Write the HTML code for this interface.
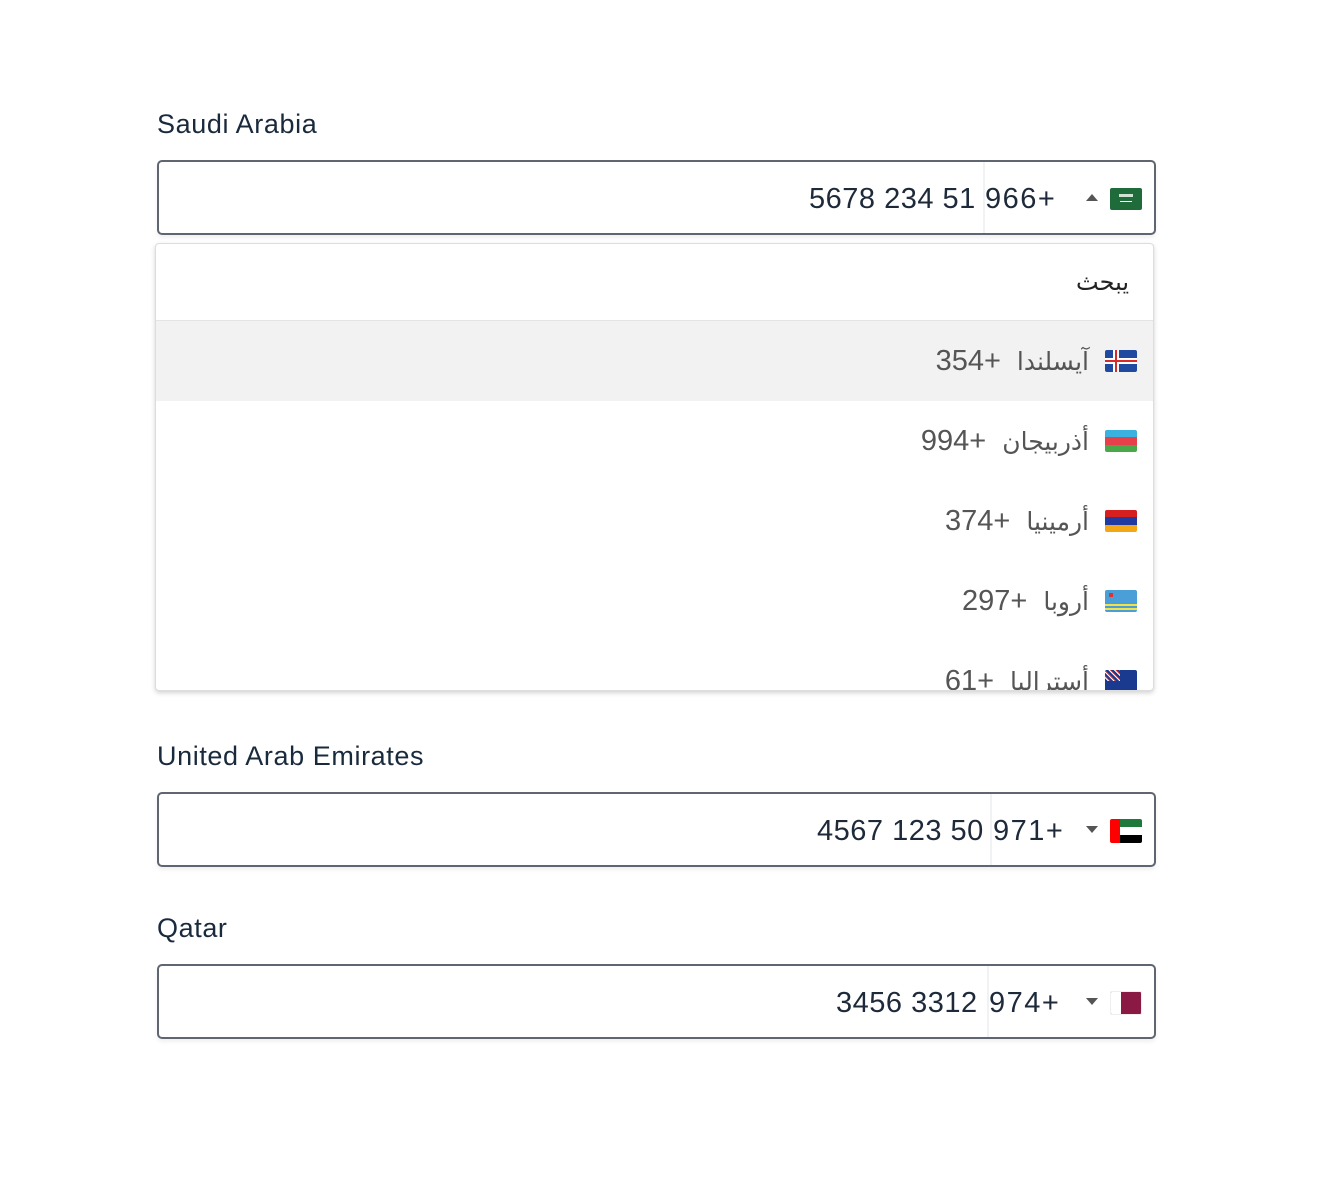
<!DOCTYPE html>
<html><head><meta charset="utf-8"><style>
body{margin:0;width:1324px;height:1186px;background:#fff;position:relative;font-family:"Liberation Sans","DejaVu Sans",sans-serif;overflow:hidden}
.lbl{position:absolute;left:157px;font-size:27px;letter-spacing:0.6px;color:#1a2a3d;line-height:30px}
.box{position:absolute;left:157px;width:995px;height:71px;border:2px solid #5f6671;border-radius:5px;box-shadow:0 3px 4px rgba(0,0,0,0.06)}
.num{position:absolute;font-size:29px;letter-spacing:0.5px;color:#1e2a3a;line-height:74px;top:0;white-space:nowrap}
.cc{letter-spacing:1.5px}
.sep{position:absolute;top:0;width:2px;height:71px;background:#f0f2f4}
.arr{position:absolute;top:32px;width:0;height:0;border-left:6px solid transparent;border-right:6px solid transparent}
.flag{position:absolute;width:32px;height:22px;border-radius:2px;overflow:hidden}
.dd{position:absolute;left:155px;top:243px;width:997px;height:446px;border:1px solid #ddd;border-radius:4px;box-shadow:0 2px 5px rgba(0,0,0,0.18);overflow:hidden;background:#fff}
.row{position:absolute;left:0;width:997px;height:80px}
.rt{position:absolute;right:64px;top:0;line-height:80px;color:#555;white-space:nowrap}
.rt .n{font-family:"Liberation Sans",sans-serif;font-size:29px;letter-spacing:1.5px}
.rt .a{font-family:"DejaVu Sans",sans-serif;font-size:25px;margin-left:16px}
.row .flag{right:16px;top:29px}
</style></head><body>
<div class="lbl" style="top:109px">Saudi Arabia</div>
<div class="box" style="top:160px">
 <div class="num" style="left:650px">5678 234 51</div>
 <div class="sep" style="left:824px"></div>
 <div class="num cc" style="left:826px">966+</div>
 <div class="arr" style="left:927px;top:32px;border-bottom:7px solid #555"></div>
 <div class="flag" style="left:951px;top:26px;background:#1f6b3a"><div style="position:absolute;left:9px;top:6px;width:14px;height:3px;background:#cfe3d4"></div><div style="position:absolute;left:10px;top:13px;width:12px;height:1px;background:#fff"></div></div>
</div>
<div class="dd">
 <div style="position:absolute;right:24px;top:0;line-height:76px;font-size:24px;color:#222;font-family:'DejaVu Sans',sans-serif">يبحث</div>
 <div style="position:absolute;left:0;top:76px;width:997px;height:1px;background:#e4e4e4"></div>
 <div class="row" style="top:77px;background:#f2f2f2"><div class="rt"><span class="n">354+</span><span class="a">آيسلندا</span></div>
  <div class="flag" style="background:#1f4a9f"><div style="position:absolute;left:8px;top:0;width:6px;height:22px;background:#fff"></div><div style="position:absolute;left:0;top:8px;width:32px;height:6px;background:#fff"></div><div style="position:absolute;left:10px;top:0;width:2px;height:22px;background:#d82a2a"></div><div style="position:absolute;left:0;top:10px;width:32px;height:2px;background:#d82a2a"></div></div></div>
 <div class="row" style="top:157px"><div class="rt"><span class="n">994+</span><span class="a">أذربيجان</span></div>
  <div class="flag"><div style="height:7px;background:#3bb1e0"></div><div style="height:8px;background:#e8404a"></div><div style="height:7px;background:#4aa84a"></div></div></div>
 <div class="row" style="top:237px"><div class="rt"><span class="n">374+</span><span class="a">أرمينيا</span></div>
  <div class="flag"><div style="height:7px;background:#d6201f"></div><div style="height:8px;background:#1f3aa0"></div><div style="height:7px;background:#f3a616"></div></div></div>
 <div class="row" style="top:317px"><div class="rt"><span class="n">297+</span><span class="a">أروبا</span></div>
  <div class="flag" style="background:#4a9fd8"><div style="position:absolute;left:0;top:14px;width:32px;height:2px;background:#f3e24a"></div><div style="position:absolute;left:0;top:18px;width:32px;height:2px;background:#f3e24a"></div><div style="position:absolute;left:4px;top:3px;width:4px;height:4px;background:#d33"></div></div></div>
 <div class="row" style="top:397px"><div class="rt"><span class="n">61+</span><span class="a">أستراليا</span></div>
  <div class="flag" style="background:#1a3a8f"><div style="position:absolute;left:0;top:0;width:15px;height:11px;background:repeating-linear-gradient(45deg,#1a3a8f 0 2px,#fff 2px 3px,#d33 3px 4px)"></div></div></div>
</div>
<div class="lbl" style="top:741px">United Arab Emirates</div>
<div class="box" style="top:792px">
 <div class="num" style="left:658px">4567 123 50</div>
 <div class="sep" style="left:831px"></div>
 <div class="num cc" style="left:834px">971+</div>
 <div class="arr" style="left:927px;top:32px;border-top:7px solid #555"></div>
 <div class="flag" style="left:951px;top:25px;height:24px"><div style="position:absolute;left:0;top:0;width:10px;height:24px;background:#f00"></div><div style="position:absolute;left:10px;top:0;width:22px;height:8px;background:#1e7a3a"></div><div style="position:absolute;left:10px;top:8px;width:22px;height:8px;background:#fff"></div><div style="position:absolute;left:10px;top:16px;width:22px;height:8px;background:#000"></div></div>
</div>
<div class="lbl" style="top:913px">Qatar</div>
<div class="box" style="top:964px">
 <div class="num" style="left:677px">3456 3312</div>
 <div class="sep" style="left:828px"></div>
 <div class="num cc" style="left:830px">974+</div>
 <div class="arr" style="left:927px;top:32px;border-top:7px solid #555"></div>
 <div class="flag" style="left:951px;top:25px;height:24px;background:#8a1a43;border:1px solid #eee;box-sizing:border-box"><div style="position:absolute;left:0;top:0;width:10px;height:24px;background:#fff"></div></div>
</div>
</body></html>
